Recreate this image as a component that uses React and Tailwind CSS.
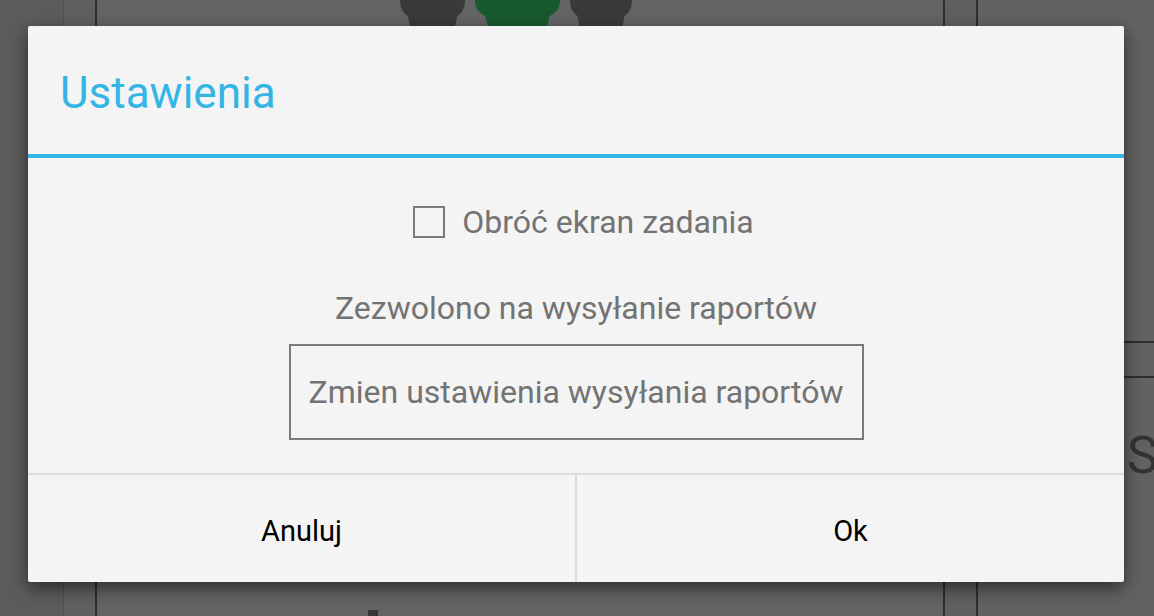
const Pawn = ({ color, w }) => (
  <svg width={w} height="26" viewBox="0 0 66 26" preserveAspectRatio="none" className="block">
    <path
      d="M0 0 H66 C66 8 63 13 58 16 L56 26 H10 L8 16 C3 13 0 8 0 0 Z"
      fill={color}
    />
  </svg>
);

const Background = () => {
  return (
    <div className="absolute inset-0 flex bg-[#646464]">
      <div className="w-[64px] bg-[#5c5c5c] border-r border-[#4f4f4f]" />
      <div className="w-[33px] bg-[#606060] border-r-2 border-[#2e2e2e]" />
      <div className="flex-1 flex flex-col">
        <div className="flex gap-[10px] pl-[303px]">
          <Pawn color="#3a3a3a" w={65} />
          <Pawn color="#185a2e" w={85} />
          <Pawn color="#3a3a3a" w={62} />
        </div>
        <div className="flex-1" />
        <div className="flex pl-[271px]">
          <div className="w-[10px] h-[6px] bg-[#363636]" />
        </div>
      </div>
      <div className="w-[35px] bg-[#606060] border-l-2 border-r-2 border-[#2e2e2e]" />
      <div className="w-[176px] flex flex-col bg-[#626262]">
        <div className="h-[343px] border-b-2 border-[#2e2e2e]" />
        <div className="h-[35px] border-b-2 border-[#2e2e2e]" />
        <div className="pt-[52px] pl-[149px] text-[52px] leading-none text-[#333] font-['Roboto',sans-serif]">
          S
        </div>
      </div>
    </div>
  );
};

export default function App() {
  return (
    <div className="relative w-[1154px] h-[616px] overflow-hidden font-['Roboto','Liberation_Sans',sans-serif]">
      <Background />

      {/* Dialog */}
      <div className="absolute left-[28px] top-[26px] w-[1096px] h-[556px] flex flex-col bg-[#f4f4f4] shadow-[0_6px_18px_rgba(0,0,0,0.55)] rounded-[2px]">
        <div className="h-[128px] flex items-center pl-[32px]">
          <h1 className="text-[44px] text-[#33b5e5] leading-none pt-[6px]">Ustawienia</h1>
        </div>
        <div className="h-[4px] bg-[#33b5e5]" />

        <div className="flex-1 flex flex-col items-center">
          <label className="mt-[48px] pl-[15px] flex items-center gap-[17px]">
            <span className="w-[32px] h-[32px] border-2 border-[#7a7a7a] bg-[#f4f4f4]" />
            <span className="text-[32px] leading-none text-[#737373]">Obróć ekran zadania</span>
          </label>

          <p className="mt-[54px] text-[32px] leading-none text-[#737373]">Zezwolono na wysyłanie raportów</p>

          <button className="mt-[20px] w-[575px] h-[96px] border-2 border-[#7a7a7a] text-[32px] leading-none text-[#737373]">
            Zmien ustawienia wysyłania raportów
          </button>
        </div>

        <div className="h-[109px] flex border-t-2 border-[#dcdcdc]">
          <button className="flex-1 pt-[6px] text-[29px] text-black border-r-2 border-[#dcdcdc]">Anuluj</button>
          <button className="flex-1 pt-[6px] text-[29px] text-black">Ok</button>
        </div>
      </div>
    </div>
  );
}
